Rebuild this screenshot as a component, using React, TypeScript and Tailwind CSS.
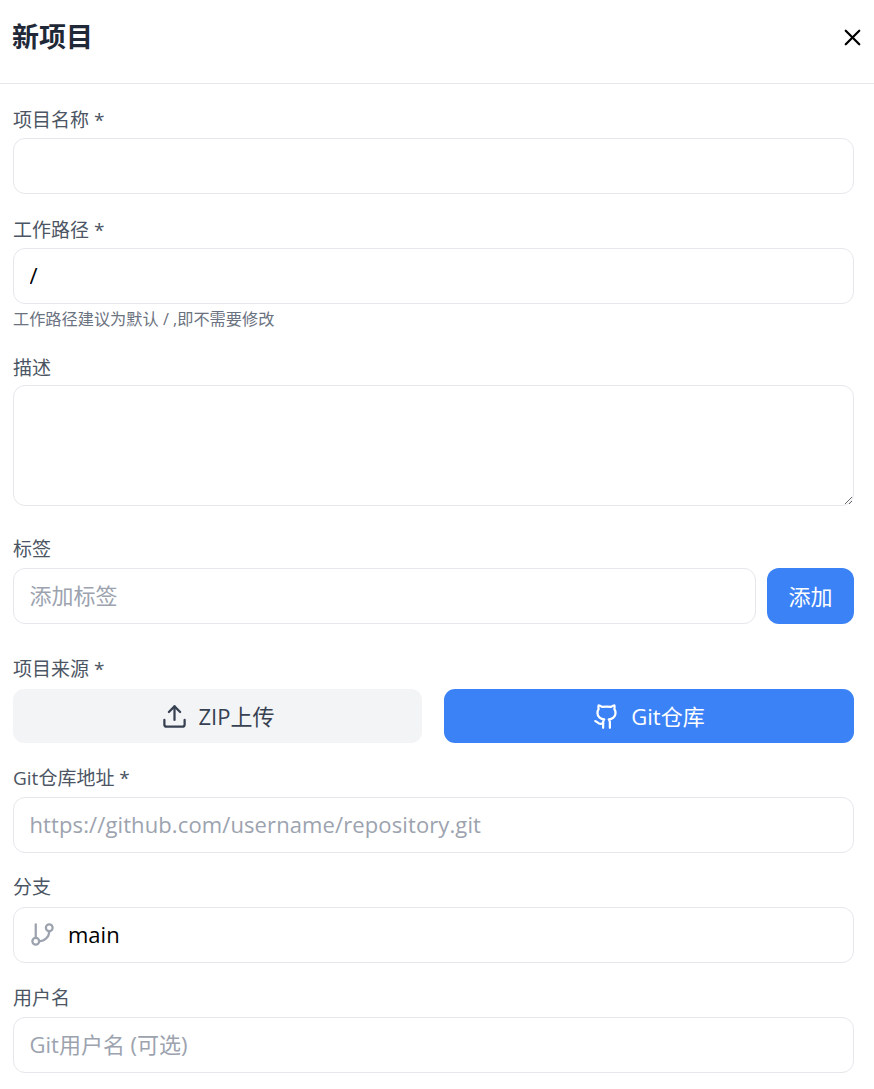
import { GitBranch, Github, Upload, X } from "lucide-react";
import type { ReactNode } from "react";

const font = { fontFamily: '"Open Sans", "Noto Sans CJK SC", sans-serif' };

const inputClass =
  "h-[56px] w-full rounded-[12px] border border-[#e5e7eb] bg-white px-[15.5px] pb-[2px] text-[22px] text-black outline-none placeholder:text-[#9ca3af]";

const Label = ({ children }: { children: ReactNode }) => (
  <label className="block text-[19px] leading-[26px] text-[#4b5563]">{children}</label>
);

export default function App() {
  return (
    <div className="h-[1089px] w-[874px] overflow-hidden bg-white" style={font}>
      <div className="flex h-[84px] items-center justify-between border-b border-[#e5e7eb] pr-[8px] pb-[8px] pl-3">
        <h2 className="text-[27px] font-bold text-[#1f2937]">新项目</h2>
        <button className="text-black">
          <X size={27} strokeWidth={2} />
        </button>
      </div>

      <form className="px-[13px] pr-[20px] pt-[23px]">
        <Label>项目名称 *</Label>
        <input type="text" className={`${inputClass} mt-[5px]`} />

        <div className="mt-[23px]">
          <Label>工作路径 *</Label>
          <input type="text" defaultValue="/" className={`${inputClass} mt-[5px]`} />
          <p className="text-[16.2px] leading-[30px] text-[#6b7280]">工作路径建议为默认 / ,即不需要修改</p>
        </div>

        <div className="mt-[21px]">
          <Label>描述</Label>
          <textarea className="mt-[4px] block h-[121px] w-full rounded-[12px] border border-[#e5e7eb] bg-white px-4 py-2 text-[22px] outline-none" />
        </div>

        <div className="mt-[30px]">
          <Label>标签</Label>
          <div className="mt-[6px] flex gap-[11px]">
            <input type="text" placeholder="添加标签" className={`${inputClass} flex-1`} />
            <button type="button" className="h-[56px] w-[87px] rounded-[12px] bg-[#3b82f6] text-[22px] text-white">
              添加
            </button>
          </div>
        </div>

        <div className="mt-[32px]">
          <Label>项目来源 *</Label>
          <div className="mt-[7px] grid grid-cols-[409px_1fr] gap-[22px]">
            <button type="button" className="flex h-[54px] items-center justify-center gap-[11px] rounded-[11px] bg-[#f3f4f6] text-[22px] text-[#374151]">
              <Upload size={27} strokeWidth={2} />
              ZIP上传
            </button>
            <button type="button" className="flex h-[54px] items-center justify-center gap-[11px] rounded-[11px] bg-[#3b82f6] text-[22px] text-white">
              <Github size={27} strokeWidth={2} />
              Git仓库
            </button>
          </div>
        </div>

        <div className="mt-[22px]">
          <Label>Git仓库地址 *</Label>
          <input type="text" placeholder="https://github.com/username/repository.git" className={`${inputClass} mt-[6px] tracking-[0.11px]`} />
        </div>

        <div className="mt-[21px]">
          <Label>分支</Label>
          <div className="relative mt-[7px]">
            <GitBranch size={27} strokeWidth={2} className="absolute top-[14px] left-[16px] text-[#9ca3af]" />
            <input type="text" defaultValue="main" className={`${inputClass} pl-[54px]`} />
          </div>
        </div>

        <div className="mt-[22px]">
          <Label>用户名</Label>
          <input type="text" placeholder="Git用户名 (可选)" className={`${inputClass} mt-[6px]`} />
        </div>
      </form>
    </div>
  );
}
